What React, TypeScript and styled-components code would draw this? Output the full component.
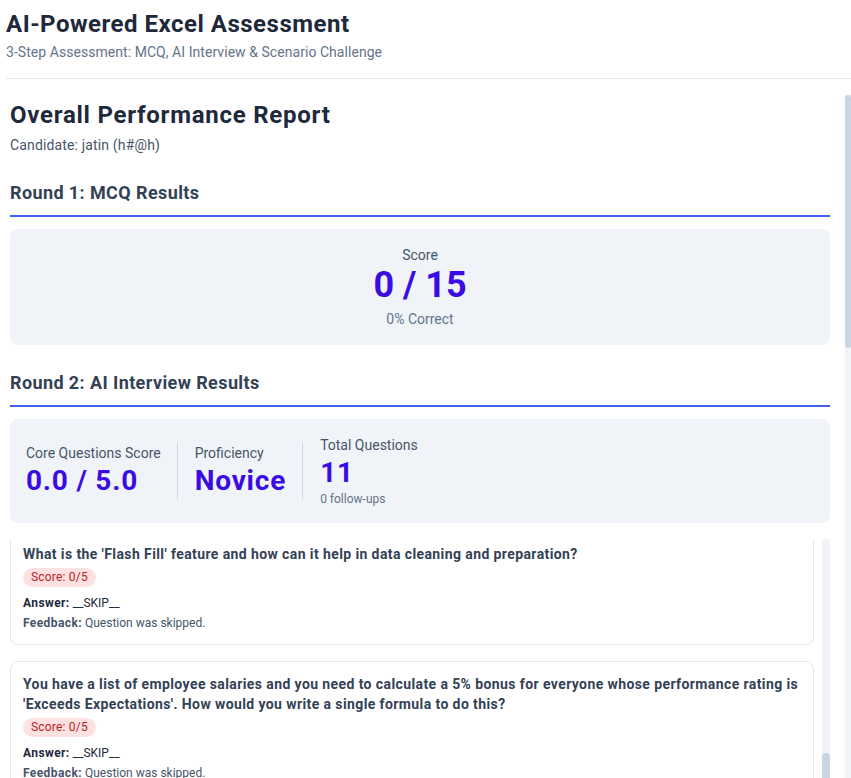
import React, { useEffect, useRef } from "react";
import styled, { createGlobalStyle } from "styled-components";

const GlobalStyle = createGlobalStyle`
  html, body {
    margin: 0;
    padding: 0;
    background: #ffffff;
    overflow: hidden;
  }
  body {
    font-family: Roboto, "Noto Sans", sans-serif;
    color: #1e293b;
  }
  * { box-sizing: border-box; }
`;

const Shell = styled.div`
  height: 100vh;
  display: flex;
  flex-direction: column;
  padding-left: 6px;
`;

const Header = styled.header`
  padding: 8px 0 16px;
  border-bottom: 1px solid #e2e8f0;
`;

const AppTitle = styled.h1`
  margin: 0;
  font-size: 24px;
  line-height: 32px;
  font-weight: 700;
  letter-spacing: 0.5px;
  color: #1e293b;
`;

const AppSubtitle = styled.p`
  margin: 2px 0 0;
  font-size: 14px;
  line-height: 20px;
  letter-spacing: 0.05px;
  color: #64748b;
`;

const Viewport = styled.div`
  flex: 1;
  min-height: 0;
  margin-top: 16px;
  display: flex;
`;

const ScrollArea = styled.main`
  flex: 1;
  min-width: 0;
  overflow-y: auto;
  padding: 4px 15px 0 4px;
  scrollbar-width: none;
  &::-webkit-scrollbar { display: none; }
`;

const ScrollTrack = styled.div<{ $width: number }>`
  flex: 0 0 ${(p) => p.$width}px;
  background: #f1f5f9;
  display: flex;
  flex-direction: column;
`;

const ScrollThumb = styled.div<{ $offset: number; $height: number; $radius: number }>`
  margin-top: ${(p) => p.$offset}px;
  height: ${(p) => p.$height}px;
  background: #cbd5e1;
  border-radius: ${(p) => p.$radius}px;
`;

const ReportTitle = styled.h2`
  margin: 0;
  font-size: 24px;
  line-height: 32px;
  font-weight: 700;
  letter-spacing: 0.75px;
  color: #1e293b;
`;

const Candidate = styled.p`
  margin: 4px 0 0;
  font-size: 14px;
  line-height: 20px;
  letter-spacing: 0.15px;
  color: #475569;
`;

const SectionHeading = styled.h3`
  margin: 26px 0 0;
  padding-bottom: 10px;
  border-bottom: 2px solid #4361ee;
  font-size: 18px;
  line-height: 24px;
  font-weight: 700;
  letter-spacing: 0.4px;
  color: #334155;
`;

const ScorePanel = styled.div`
  margin-top: 12px;
  background: #f0f4f8;
  border-radius: 8px;
  padding: 16px;
  text-align: center;
`;

const PanelLabel = styled.div`
  font-size: 14px;
  line-height: 20px;
  color: #475569;
`;

const BigValue = styled.div<{ $size?: number }>`
  font-size: ${(p) => p.$size ?? 36}px;
  line-height: ${(p) => (p.$size ? p.$size + 8 : 40)}px;
  letter-spacing: ${(p) => (p.$size ? 0.8 : 0)}px;
  font-weight: 700;
  color: #3a0ce3;
`;

const PanelNote = styled.div`
  margin-top: 4px;
  font-size: 14px;
  line-height: 20px;
  color: #64748b;
`;

const StatsPanel = styled.div`
  margin-top: 12px;
  background: #f0f4f8;
  border-radius: 8px;
  padding: 16px;
  display: flex;
  align-items: center;
  gap: 17px;
`;

const Stat = styled.div<{ $divider?: boolean }>`
  padding-right: ${(p) => (p.$divider ? 16 : 0)}px;
  border-right: ${(p) => (p.$divider ? "1px solid #cbd5e1" : "none")};
`;

const StatNote = styled.div`
  font-size: 12px;
  line-height: 16px;
  color: #64748b;
`;

const ListFrame = styled.div`
  margin-top: 16px;
  height: 400px;
  display: flex;
  gap: 8px;
`;

const QuestionList = styled.div`
  flex: 1;
  min-width: 0;
  overflow-y: auto;
  display: flex;
  flex-direction: column;
  gap: 16px;
  scrollbar-width: none;
  &::-webkit-scrollbar { display: none; }
`;

const QuestionCard = styled.div`
  flex-shrink: 0;
  border: 1px solid #e2e8f0;
  border-radius: 8px;
  padding: 12px;
  background: #ffffff;
`;

const QuestionText = styled.div`
  font-size: 14px;
  line-height: 20px;
  font-weight: 700;
  letter-spacing: 0.4px;
  color: #334155;
`;

const ScoreBadge = styled.span`
  display: inline-block;
  margin-top: 4px;
  padding: 0 8px;
  height: 19px;
  line-height: 19px;
  border-radius: 10px;
  background: #fee2e2;
  color: #b91c1c;
  font-size: 12px;
  letter-spacing: 0.2px;
`;

const Detail = styled.div<{ $first?: boolean }>`
  margin-top: ${(p) => (p.$first ? 7 : 2)}px;
  font-size: 12px;
  line-height: 18px;
  color: #475569;

  strong { color: #1e293b; font-weight: 700; letter-spacing: 0.4px; }
`;

const Feedback = styled(Detail)`
  strong { color: #475569; }
`;

const AnswerText = styled.span`
  color: #1e293b;
`;

const ScenarioCard = styled(QuestionCard)`
  margin-top: 12px;
`;

const Recommendation = styled.div`
  margin-top: 12px;
  padding: 16px;
  border-radius: 8px;
  background: #fef2f2;
  border: 1px solid #fecaca;
  color: #991b1b;
  font-size: 14px;
  line-height: 22px;
`;

const RestartButton = styled.button`
  display: block;
  margin: 24px auto 40px;
  padding: 10px 24px;
  border: none;
  border-radius: 8px;
  background: #4361ee;
  color: #ffffff;
  font-family: inherit;
  font-size: 14px;
  font-weight: 700;
`;

const questions = [
  "Explain the difference between relative, absolute, and mixed cell references in Excel.",
  "How would you use VLOOKUP to find a value in another table, and what are its main limitations?",
  "What is a PivotTable and in which situations would you use one to summarize data?",
  "How does the IF function work? Give an example that uses nested conditions.",
  "What is conditional formatting and how would you use it to highlight duplicate values?",
  "Explain the difference between COUNT, COUNTA, and COUNTIF.",
  "What is the 'Flash Fill' feature and how can it help in data cleaning and preparation?",
  "You have a list of employee salaries and you need to calculate a 5% bonus for everyone whose performance rating is 'Exceeds Expectations'. How would you write a single formula to do this?",
  "How would you use INDEX and MATCH together instead of VLOOKUP?",
  "What are Excel Tables and what advantages do they offer over normal ranges?",
  "How would you protect specific cells in a worksheet while still allowing edits to others?",
];

const FOCUS_INDEX = 6;

export default function App() {
  const listRef = useRef<HTMLDivElement>(null);
  const focusRef = useRef<HTMLDivElement>(null);

  useEffect(() => {
    const list = listRef.current;
    const card = focusRef.current;
    if (list && card) {
      list.scrollTop = card.offsetTop - list.offsetTop + 8;
    }
  }, []);

  return (
    <>
      <GlobalStyle />
      <Shell>
        <Header>
          <AppTitle>AI-Powered Excel Assessment</AppTitle>
          <AppSubtitle>3-Step Assessment: MCQ, AI Interview &amp; Scenario Challenge</AppSubtitle>
        </Header>
        <Viewport>
          <ScrollArea>
            <ReportTitle>Overall Performance Report</ReportTitle>
            <Candidate>Candidate: jatin (h#@h)</Candidate>

            <SectionHeading>Round 1: MCQ Results</SectionHeading>
            <ScorePanel>
              <PanelLabel>Score</PanelLabel>
              <BigValue>0 / 15</BigValue>
              <PanelNote>0% Correct</PanelNote>
            </ScorePanel>

            <SectionHeading>Round 2: AI Interview Results</SectionHeading>
            <StatsPanel>
              <Stat $divider>
                <PanelLabel>Core Questions Score</PanelLabel>
                <BigValue $size={28}>0.0 / 5.0</BigValue>
              </Stat>
              <Stat $divider>
                <PanelLabel>Proficiency</PanelLabel>
                <BigValue $size={28}>Novice</BigValue>
              </Stat>
              <Stat>
                <PanelLabel>Total Questions</PanelLabel>
                <BigValue $size={28}>11</BigValue>
                <StatNote>0 follow-ups</StatNote>
              </Stat>
            </StatsPanel>

            <ListFrame>
              <QuestionList ref={listRef}>
                {questions.map((q, i) => (
                  <QuestionCard key={i} ref={i === FOCUS_INDEX ? focusRef : undefined}>
                    <QuestionText>{q}</QuestionText>
                    <ScoreBadge>Score: 0/5</ScoreBadge>
                    <Detail $first>
                      <strong>Answer:</strong> <AnswerText>__SKIP__</AnswerText>
                    </Detail>
                    <Feedback>
                      <strong>Feedback:</strong> Question was skipped.
                    </Feedback>
                  </QuestionCard>
                ))}
              </QuestionList>
              <ScrollTrack $width={8}>
                <ScrollThumb $offset={214} $height={110} $radius={4} />
              </ScrollTrack>
            </ListFrame>

            <SectionHeading>Round 3: Scenario Challenge Results</SectionHeading>
            <ScorePanel>
              <PanelLabel>Scenario Score</PanelLabel>
              <BigValue>0 / 10</BigValue>
              <PanelNote>Scenario not completed</PanelNote>
            </ScorePanel>
            <ScenarioCard>
              <QuestionText>Scenario: Build a monthly sales summary from raw transaction data.</QuestionText>
              <ScoreBadge>Score: 0/10</ScoreBadge>
              <Detail $first>
                <strong>Answer:</strong> <AnswerText>__SKIP__</AnswerText>
              </Detail>
              <Feedback>
                <strong>Feedback:</strong> Scenario was skipped.
              </Feedback>
            </ScenarioCard>

            <SectionHeading>Final Recommendation</SectionHeading>
            <Recommendation>
              The candidate did not demonstrate sufficient Excel proficiency across the three rounds.
              Further training on core formulas, lookups and data analysis tools is recommended.
            </Recommendation>
            <RestartButton>Start New Assessment</RestartButton>
          </ScrollArea>
          <ScrollTrack $width={6}>
            <ScrollThumb $offset={0} $height={253} $radius={3} />
          </ScrollTrack>
        </Viewport>
      </Shell>
    </>
  );
}
